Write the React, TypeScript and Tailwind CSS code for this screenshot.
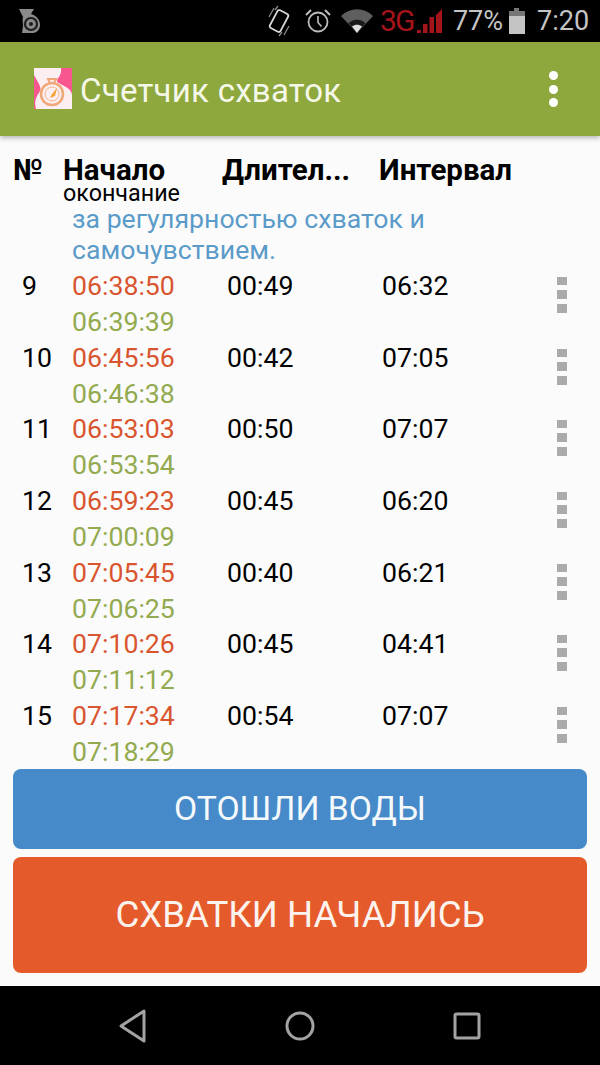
const rows = [
  { n: '9', start: '06:38:50', end: '06:39:39', dur: '00:49', gap: '06:32' },
  { n: '10', start: '06:45:56', end: '06:46:38', dur: '00:42', gap: '07:05' },
  { n: '11', start: '06:53:03', end: '06:53:54', dur: '00:50', gap: '07:07' },
  { n: '12', start: '06:59:23', end: '07:00:09', dur: '00:45', gap: '06:20' },
  { n: '13', start: '07:05:45', end: '07:06:25', dur: '00:40', gap: '06:21' },
  { n: '14', start: '07:10:26', end: '07:11:12', dur: '00:45', gap: '04:41' },
  { n: '15', start: '07:17:34', end: '07:18:29', dur: '00:54', gap: '07:07' },
];

function StatusBar() {
  return (
    <div className="flex h-[42px] shrink-0 items-center bg-black pl-[19px] pr-[10px]">
      {/* notification icon */}
      <svg width="22" height="24" viewBox="0 0 22 24" className="mr-[225px]">
        <path d="M0 0h15l-3 5c6 2 9 6 9 11 0 4-3 8-7 8H3l1-7c0-4-1-6 0-9z" fill="#8a8a8a" />
        <circle cx="12" cy="15" r="6" fill="none" stroke="#1c1c1c" strokeWidth="2.200" />
        <circle cx="12" cy="15" r="2" fill="#1c1c1c" />
      </svg>
      <svg width="26" height="32" viewBox="0 0 26 32" className="mr-[12px]">
        <rect x="7" y="6" width="12" height="20" rx="2" transform="rotate(28 13 16)" fill="none" stroke="#d8d8d8" strokeWidth="1.800" />
        <path d="M8 3 3 12M12 1 9 5M18 30l5-9M13 31l3-4" stroke="#8a8a8a" strokeWidth="1.300" fill="none" />
      </svg>
      <svg width="28" height="28" viewBox="0 0 28 28" className="mr-[9px]">
        <circle cx="14" cy="15" r="9.500" fill="none" stroke="#bdbdbd" strokeWidth="1.800" />
        <path d="M14 9v6.500l3.500 4" fill="none" stroke="#bdbdbd" strokeWidth="1.600" />
        <path d="M2 8 7 3M26 8 21 3" stroke="#bdbdbd" strokeWidth="2" />
      </svg>
      <svg width="32" height="26" viewBox="0 0 32 26" className="mr-[7px]">
        <path d="M0 8C9-1 23-1 32 8L16 25z" fill="#5e5e5e" />
        <path d="M7.500 15c5-4.500 12-4.500 17 0L16 25z" fill="#1a1a1a" />
        <path d="M11 18.500c3-2.300 7-2.300 10 0L16 25z" fill="#e0e0e0" />
      </svg>
      <span className="mr-[3px] w-[33px] font-['Roboto',sans-serif] text-[30px] leading-none tracking-[-1.800px] text-[#a5141b]">3G</span>
      <svg width="28" height="28" viewBox="0 0 28 28" className="mr-[9px]">
        <path d="M1 26h4v-3H1zM7 26h4.500V17H7zM13.500 26H18V10h-4.500zM20 26h6V2l-6 6z" fill="#a5141b" />
      </svg>
      <span className="mr-[5px] w-[50px] font-['Roboto',sans-serif] text-[27px] leading-none tracking-[-0.100px] text-[#c4c4c4]">77%</span>
      <svg width="18" height="26" viewBox="0 0 18 26" className="mr-[11px]">
        <path d="M6 0h5v3H6z" fill="#777" />
        <path d="M1 3h16v5H1z" fill="#777" />
        <path d="M1 8h16v18H1z" fill="#c4c4c4" />
      </svg>
      <span className="font-['Roboto',sans-serif] text-[27px] leading-none text-[#c4c4c4]">7:20</span>
    </div>
  );
}

function AppIcon() {
  return (
    <svg width="40" height="44" viewBox="0 0 40 44">
      <rect x="1" y="1" width="38" height="41" fill="#f7568f" />
      <path d="M1 1h27c1 8-4 10-4 13 0 3 15 6 15 14v14H3c-2-8 0-12 4-18 2-4-3-10-6-16z" fill="#fdeef2" />
      <circle cx="19" cy="27" r="11" fill="none" stroke="#f0a878" strokeWidth="2.500" />
      <circle cx="19" cy="27" r="7" fill="#fdeef2" stroke="#f2b88f" strokeWidth="1" />
      <path d="M15 12h8l-2 4h-4z" fill="none" stroke="#f0a878" strokeWidth="2" />
      <path d="m19 27 5-6-2 8-5 2z" fill="#f0a53a" />
    </svg>
  );
}

function AppBar() {
  return (
    <div className="relative z-10 flex h-[94px] shrink-0 items-center bg-[#8ea83d] pl-[33px] pr-[42px] shadow-[0_2px_5px_rgba(0,0,0,0.28)]">
      <AppIcon />
      <span className="ml-[7px] mt-[2px] flex-1 font-['Roboto',sans-serif] text-[33px] leading-none tracking-[0.25px] text-[#f5f7e8]">
        Счетчик схваток
      </span>
      <div className="flex flex-col gap-[4.500px]">
        <div className="size-[9px] rounded-full bg-white" />
        <div className="size-[9px] rounded-full bg-white" />
        <div className="size-[9px] rounded-full bg-white" />
      </div>
    </div>
  );
}

function TableHeader() {
  return (
    <div className="flex h-[68px] shrink-0 pl-[13px] pt-[19px] text-[29.500px] leading-[30px] font-bold text-black">
      <div className="w-[50px]">№</div>
      <div className="w-[159px]">
        <div>Начало</div>
        <div className="text-[23.300px] leading-[16px] font-normal">окончание</div>
      </div>
      <div className="w-[157px]">Длител...</div>
      <div>Интервал</div>
    </div>
  );
}

function Row({ n, start, end, dur, gap }: (typeof rows)[number]) {
  return (
    <div className="flex h-[71.670px] items-start text-[26.670px] leading-[36px] text-black">
      <div className="w-[72px] pl-[22px]">{n}</div>
      <div className="w-[155px]">
        <div className="text-[#d9552f]">{start}</div>
        <div className="mt-[2px] leading-[32px] text-[#93aa50]">{end}</div>
      </div>
      <div className="w-[155px]">{dur}</div>
      <div className="w-[175px]">{gap}</div>
      <div className="mt-[9px] flex flex-col gap-[5px]">
        <div className="h-[8px] w-[10px] bg-[#ababab]" />
        <div className="h-[9px] w-[10px] bg-[#ababab]" />
        <div className="h-[9px] w-[10px] bg-[#ababab]" />
      </div>
    </div>
  );
}

export default function App() {
  return (
    <div className="flex h-[1065px] w-[600px] flex-col overflow-hidden bg-[#fbfbfb] font-['Roboto',sans-serif]">
      <StatusBar />
      <AppBar />
      <TableHeader />
      <div className="h-[565px] shrink-0 overflow-hidden">
        <div className="pl-[72px] text-[26.670px] leading-[30px] text-[#5b9bc9]">
          <div>за регулярностью схваток и</div>
          <div className="mt-[1px]">самочувствием.</div>
        </div>
        <div className="mt-[3px]">
          {rows.map((row) => (
            <Row key={row.n} {...row} />
          ))}
        </div>
      </div>
      <div className="flex shrink-0 flex-col gap-[8px] px-[13px]">
        <button className="h-[80px] rounded-[8px] bg-[#468ac9] text-[33.700px] text-[#f5f9fc]">ОТОШЛИ ВОДЫ</button>
        <button className="h-[116px] rounded-[8px] bg-[#e55a2b] text-[36.600px] text-[#fdf3ee]">СХВАТКИ НАЧАЛИСЬ</button>
      </div>
      <div className="mt-[13px] flex flex-1 items-center justify-between bg-black pl-[118px] pr-[118px]">
        <svg width="30" height="36" viewBox="0 0 30 36">
          <path d="M26 3v30L3 18z" fill="none" stroke="#a3a3a3" strokeWidth="3" strokeLinejoin="round" />
        </svg>
        <svg width="32" height="32" viewBox="0 0 32 32">
          <circle cx="16" cy="16" r="13" fill="none" stroke="#a3a3a3" strokeWidth="3" />
        </svg>
        <svg width="30" height="30" viewBox="0 0 30 30">
          <rect x="3" y="3" width="24" height="24" rx="1.500" fill="none" stroke="#a3a3a3" strokeWidth="3" />
        </svg>
      </div>
    </div>
  );
}
